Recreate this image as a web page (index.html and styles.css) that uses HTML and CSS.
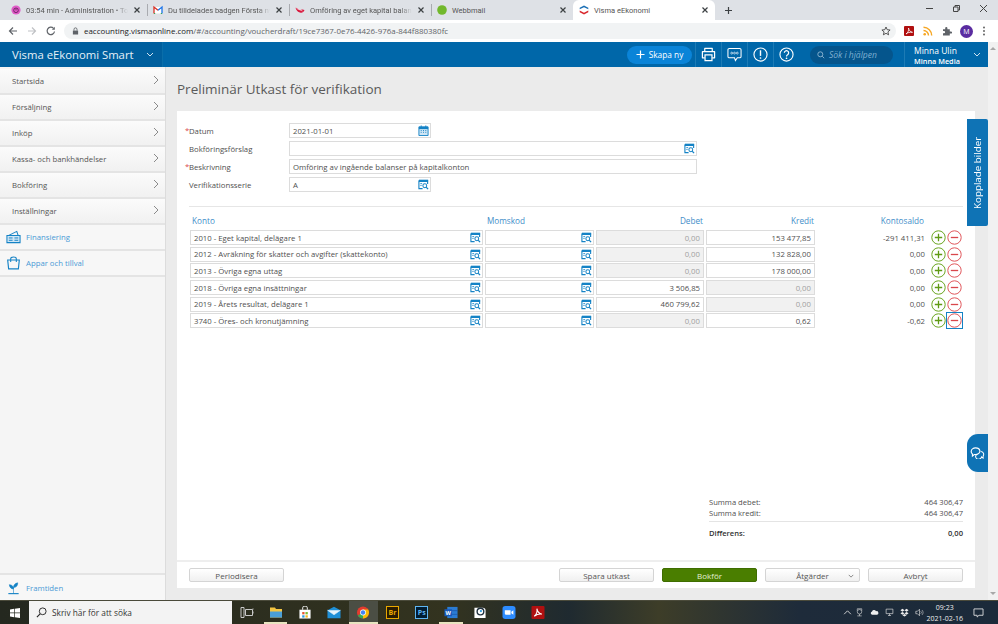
FILE: index.html
```html
<!DOCTYPE html>
<html lang="sv">
<head>
<meta charset="utf-8">
<title>Visma eEkonomi</title>
<link rel="stylesheet" href="styles.css">
</head>
<body>
<svg class="defs" width="0" height="0" aria-hidden="true">
  <symbol id="lookup" viewBox="0 0 12 12">
    <path d="M1 1.500h9.500v4M1 1.500v9h4" fill="none" stroke="#1482c5" stroke-width="1.200"/>
    <path d="M1 1h10v2.300H1z" fill="#1482c5"/>
    <path d="M2.500 5h2M2.500 7h1.500" stroke="#1482c5" stroke-width=".9"/>
    <circle cx="7.400" cy="7.400" r="2.100" fill="#fff" stroke="#1482c5" stroke-width="1.100"/>
    <path d="M9 9l2 2" stroke="#1482c5" stroke-width="1.300"/>
  </symbol>
  <symbol id="plus" viewBox="0 0 15 15">
    <circle cx="7.500" cy="7.500" r="6.700" fill="#fff" stroke="#6aa51f" stroke-width="1"/>
    <path d="M7.500 3.800v7.400M3.800 7.500h7.400" stroke="#5f9a14" stroke-width="1.300"/>
  </symbol>
  <symbol id="minus" viewBox="0 0 15 15">
    <circle cx="7.500" cy="7.500" r="6.700" fill="#fff" stroke="#e0565b" stroke-width="1"/>
    <path d="M3.800 7.500h7.400" stroke="#d9474c" stroke-width="1.300"/>
  </symbol>
  <symbol id="chev" viewBox="0 0 6 10">
    <path d="M1 1l4 4-4 4" fill="none" stroke="#8a8a8a" stroke-width="1"/>
  </symbol>
  <symbol id="down" viewBox="0 0 8 5">
    <path d="M1 1l3 3 3-3" fill="none" stroke="currentColor" stroke-width="1"/>
  </symbol>
  <symbol id="close" viewBox="0 0 8 8">
    <path d="M1.500 1.500l5 5M6.500 1.500l-5 5" stroke="#3c4043" stroke-width="1.200"/>
  </symbol>
</svg>

<div class="tabstrip">
  <div class="tab">
    <svg class="fav" viewBox="0 0 10 10"><circle cx="5" cy="5" r="4.600" fill="#e05bc8"/><circle cx="5" cy="5.300" r="2.300" fill="none" stroke="#5b1a52" stroke-width=".8"/><path d="M5 3.800v1.600" stroke="#5b1a52" stroke-width=".7"/></svg>
    <span class="tab-title fade">03:54 min - Administration • Togg</span>
    <svg class="tab-x"><use href="#close"/></svg>
  </div>
  <div class="tab tab-sep">
    <svg class="fav" viewBox="0 0 10 10"><path d="M1 2h8v6.500H1z" fill="#fff"/><path d="M1 8.500V2l4 3.200" fill="none" stroke="#d93025" stroke-width="1.300"/><path d="M9 8.500V2L5 5.200" fill="none" stroke="#1a73e8" stroke-width="1.300"/><path d="M1 8.500h1.200M7.800 8.500H9" stroke="#34a853" stroke-width="1"/></svg>
    <span class="tab-title fade">Du tilldelades badgen Första nya</span>
    <svg class="tab-x"><use href="#close"/></svg>
  </div>
  <div class="tab tab-sep">
    <svg class="fav" viewBox="0 0 10 10"><path d="M.5 2.800c2 0 3 1.700 4.500 2.200 1.500-.5 2.500-1 4.500 0C8.500 7.500 7 8 5 7.500 3 7 1.200 5.500.5 2.800z" fill="#d8163c"/><path d="M1.500 3.500l6 2.500" stroke="#fff" stroke-width=".6"/></svg>
    <span class="tab-title fade">Omföring av eget kapital balans</span>
    <svg class="tab-x"><use href="#close"/></svg>
  </div>
  <div class="tab tab-sep">
    <svg class="fav" viewBox="0 0 10 10"><circle cx="5" cy="5" r="4.800" fill="#72b82c"/></svg>
    <span class="tab-title">Webbmail</span>
    <svg class="tab-x"><use href="#close"/></svg>
  </div>
  <div class="tab tab-active">
    <svg class="fav" viewBox="0 0 10 10"><path d="M5 .5l4.300 2.300v1.500L5 2.200.7 4.300V2.800z" fill="#1a6fb5"/><path d="M.7 5.500L5 7.700l4.300-2.200v1.700L5 9.500.7 7.200z" fill="#d9292e"/></svg>
    <span class="tab-title">Visma eEkonomi</span>
    <svg class="tab-x"><use href="#close"/></svg>
  </div>
  <svg class="newtab" viewBox="0 0 9 9"><path d="M4.500 1v7M1 4.500h7" stroke="#3c4043" stroke-width="1.200"/></svg>
  <div class="winctl">
    <svg viewBox="0 0 9 9"><path d="M1 4.500h7" stroke="#444" stroke-width="1"/></svg>
    <svg viewBox="0 0 9 9"><path d="M1.500 3h4.500v4.500H1.500zM3 3V1.500h4.500V6H6" fill="none" stroke="#444" stroke-width="1"/></svg>
    <svg viewBox="0 0 9 9"><path d="M1 1l7 7M8 1L1 8" stroke="#444" stroke-width="1"/></svg>
  </div>
</div>

<div class="toolbar">
  <svg class="nav" viewBox="0 0 10 10"><path d="M9 5H1.500M5 1.500L1.500 5 5 8.500" fill="none" stroke="#5f6368" stroke-width="1.200"/></svg>
  <svg class="nav" viewBox="0 0 10 10"><path d="M1 5h7.500M5 1.500L8.500 5 5 8.500" fill="none" stroke="#c0c2c5" stroke-width="1.200"/></svg>
  <svg class="nav" viewBox="0 0 10 10"><path d="M8.500 5.500A3.700 3.700 0 1 1 7.500 2.300" fill="none" stroke="#5f6368" stroke-width="1.200"/><path d="M8.800 .8v3h-3z" fill="#5f6368"/></svg>
  <div class="urlbar">
    <svg class="lock" viewBox="0 0 8 9"><path d="M1 4h6v4.500H1z" fill="#5f6368"/><path d="M2.300 4V2.600a1.700 1.700 0 0 1 3.400 0V4" fill="none" stroke="#5f6368"/></svg>
    <span class="url"><b>eaccounting.vismaonline.com</b>/#/accounting/voucherdraft/19ce7367-0e76-4426-976a-844f880380fc</span>
    <svg class="star" viewBox="0 0 10 10"><path d="M5 1l1.200 2.700 2.900.3-2.200 1.900.7 2.900L5 7.300 2.400 8.800l.7-2.900L.9 4l2.900-.3z" fill="none" stroke="#444" stroke-width=".9"/></svg>
  </div>
  <div class="exts">
    <svg viewBox="0 0 10 10"><rect width="10" height="10" rx="1" fill="#b01010"/><path d="M2 8c2-1 3-4 2.500-6C5 4 6 6 8.500 6.300 6 6 3.500 6.500 2 8z" fill="none" stroke="#fff" stroke-width=".8"/></svg>
    <svg viewBox="0 0 10 10"><circle cx="1.700" cy="8.300" r="1.300" fill="#f6a623"/><path d="M.5 4.500A5 5 0 0 1 5.500 9.500M.5 1.300A8.200 8.200 0 0 1 8.700 9.500" fill="none" stroke="#f6a623" stroke-width="1.400"/></svg>
    <svg viewBox="0 0 10 10"><path d="M1 3.200h2.200V2a1.100 1.100 0 0 1 2.200 0v1.200h2.400v2.200H9a1.100 1.100 0 0 1 0 2.200H7.800V9.500H1V7.300h1a1.100 1.100 0 0 0 0-2.200H1z" fill="#5f6368"/></svg>
    <span class="avatar">M</span>
    <svg viewBox="0 0 4 10"><circle cx="2" cy="1.500" r=".9" fill="#555"/><circle cx="2" cy="5" r=".9" fill="#555"/><circle cx="2" cy="8.500" r=".9" fill="#555"/></svg>
  </div>
</div>

<header class="apphead">
  <div class="brand"><span>Visma eEkonomi Smart</span><svg class="down"><use href="#down"/></svg></div>
  <div class="head-spacer"></div>
  <button class="create"><svg viewBox="0 0 9 9"><path d="M4.500 .5v8M.5 4.500h8" stroke="#fff" stroke-width="1.200"/></svg>Skapa ny</button>
  <div class="head-icon divider-l"><svg viewBox="0 0 16 16"><path d="M4 5V1.500h8V5M4 11.500H1.500V5h13v6.500H12" fill="none" stroke="#fff" stroke-width="1.300" stroke-linejoin="round"/><path d="M4.300 8.500h7.400v6H4.300z" fill="none" stroke="#fff" stroke-width="1.300"/></svg></div>
  <div class="head-icon divider-l"><svg viewBox="0 0 16 16"><path d="M2.500 1.500h11a1.500 1.500 0 0 1 1.500 1.500v7a1.500 1.500 0 0 1-1.500 1.500H11l-2 3-1-3H2.500A1.500 1.500 0 0 1 1 10V3a1.500 1.500 0 0 1 1.500-1.500z" fill="none" stroke="#fff" stroke-width="1.100"/><circle cx="5" cy="6.500" r="1" fill="none" stroke="#fff" stroke-width=".7"/><circle cx="8" cy="6.500" r="1" fill="none" stroke="#fff" stroke-width=".7"/><circle cx="11" cy="6.500" r="1" fill="none" stroke="#fff" stroke-width=".7"/></svg></div>
  <div class="head-icon divider-l"><svg viewBox="0 0 16 16"><circle cx="8" cy="8" r="7" fill="none" stroke="#fff" stroke-width="1.200"/><path d="M8 3.500v6" stroke="#fff" stroke-width="1.500"/><circle cx="8" cy="11.700" r=".9" fill="#fff"/></svg></div>
  <div class="head-icon divider-l"><svg viewBox="0 0 16 16"><circle cx="8" cy="8" r="7" fill="none" stroke="#fff" stroke-width="1.200"/><path d="M5.700 6.200a2.300 2.300 0 1 1 3.500 2c-.8.500-1.200.9-1.200 1.800" fill="none" stroke="#fff" stroke-width="1.300"/><circle cx="8" cy="12" r=".9" fill="#fff"/></svg></div>
  <div class="search"><svg viewBox="0 0 8 8"><circle cx="3.300" cy="3.300" r="2.500" fill="none" stroke="#8fb7d3" stroke-width=".9"/><path d="M5.200 5.200l2 2" stroke="#8fb7d3" stroke-width=".9"/></svg><em>Sök i hjälpen</em></div>
  <div class="user divider-l"><div class="user-text"><span class="user-name">Minna Ulin</span><span class="user-org">Minna Media</span></div><svg class="down"><use href="#down"/></svg></div>
</header>

<div class="body-row">
  <nav class="sidebar">
    <a class="side-item"><span>Startsida</span><svg class="chev"><use href="#chev"/></svg></a>
    <a class="side-item"><span>Försäljning</span><svg class="chev"><use href="#chev"/></svg></a>
    <a class="side-item"><span>Inköp</span><svg class="chev"><use href="#chev"/></svg></a>
    <a class="side-item"><span>Kassa- och bankhändelser</span><svg class="chev"><use href="#chev"/></svg></a>
    <a class="side-item"><span>Bokföring</span><svg class="chev"><use href="#chev"/></svg></a>
    <a class="side-item"><span>Inställningar</span><svg class="chev"><use href="#chev"/></svg></a>
    <a class="side-item side-link"><svg class="side-ico" viewBox="0 0 16 14"><path d="M1 5.500h14v7.500H1z" fill="#cfe6f5" stroke="#1482c5" stroke-width="1.100"/><path d="M2.500 5.500L11.500 1l1.500 4.500" fill="none" stroke="#1482c5" stroke-width="1.100"/><path d="M3 8h4M9 8h4M3 10.500h4M9 10.500h4" stroke="#1482c5"/></svg><span>Finansiering</span></a>
    <a class="side-item side-link"><svg class="side-ico" viewBox="0 0 16 14"><path d="M1.800 3.800h12.400l-1 9.500H2.800z" fill="none" stroke="#1482c5" stroke-width="1.200"/><path d="M5 6V2.500a3 2 0 0 1 6 0V6" fill="none" stroke="#1482c5" stroke-width="1.100"/></svg><span>Appar och tillval</span></a>
    <div class="side-fill"></div>
    <a class="side-item side-link side-bottom"><svg class="side-ico" viewBox="0 0 16 14"><path d="M8 13V6M8 8C6 8 4 7 3.500 3.500 6 3.500 8 5 8 8zM8 6.500c0-2.500 1.500-4.500 4.500-5 0 3-1.500 5-4.500 5z" fill="#1482c5" stroke="#1482c5" stroke-width=".6"/><path d="M2.500 13h11" stroke="#1482c5" stroke-width="1.200"/></svg><span>Framtiden</span></a>
  </nav>

  <main class="content">
    <h1 class="page-title">Preliminär Utkast för verifikation</h1>
    <section class="card">
      <div class="card-body">
        <div class="form">
          <label class="lbl req">Datum</label>
          <div class="field f-short"><span>2021-01-01</span><svg class="ico" viewBox="0 0 12 12"><path d="M1 2h10v9.500H1z" fill="#cfe6f5" stroke="#1482c5"/><path d="M1 2h10v2.500H1z" fill="#1482c5"/><path d="M3.500 .5v2.500M8.500 .5v2.500" stroke="#1482c5"/><path d="M3 6h1M5.500 6h1M8 6h1M3 8h1M5.500 8h1M8 8h1" stroke="#1482c5"/></svg></div>
          <label class="lbl">Bokföringsförslag</label>
          <div class="field f-long"><span></span><svg class="ico"><use href="#lookup"/></svg></div>
          <label class="lbl req">Beskrivning</label>
          <div class="field f-long"><span>Omföring av ingående balanser på kapitalkonton</span></div>
          <label class="lbl">Verifikationsserie</label>
          <div class="field f-short"><span>A</span><svg class="ico"><use href="#lookup"/></svg></div>
        </div>
        <div class="rule"></div>

        <div class="grid grid-head">
          <span>Konto</span><span>Momskod</span><span class="r">Debet</span><span class="r">Kredit</span><span class="r">Kontosaldo</span><span></span>
        </div>
        <div class="grid">
          <div class="field"><span>2010 - Eget kapital, delägare 1</span><svg class="ico"><use href="#lookup"/></svg></div>
          <div class="field"><span></span><svg class="ico"><use href="#lookup"/></svg></div>
          <div class="field off r"><span>0,00</span></div>
          <div class="field r"><span>153 477,85</span></div>
          <span class="saldo">-291 411,31</span>
          <div class="acts"><svg><use href="#plus"/></svg><svg><use href="#minus"/></svg></div>
        </div>
        <div class="grid">
          <div class="field"><span>2012 - Avräkning för skatter och avgifter (skattekonto)</span><svg class="ico"><use href="#lookup"/></svg></div>
          <div class="field"><span></span><svg class="ico"><use href="#lookup"/></svg></div>
          <div class="field off r"><span>0,00</span></div>
          <div class="field r"><span>132 828,00</span></div>
          <span class="saldo">0,00</span>
          <div class="acts"><svg><use href="#plus"/></svg><svg><use href="#minus"/></svg></div>
        </div>
        <div class="grid">
          <div class="field"><span>2013 - Övriga egna uttag</span><svg class="ico"><use href="#lookup"/></svg></div>
          <div class="field"><span></span><svg class="ico"><use href="#lookup"/></svg></div>
          <div class="field off r"><span>0,00</span></div>
          <div class="field r"><span>178 000,00</span></div>
          <span class="saldo">0,00</span>
          <div class="acts"><svg><use href="#plus"/></svg><svg><use href="#minus"/></svg></div>
        </div>
        <div class="grid">
          <div class="field"><span>2018 - Övriga egna insättningar</span><svg class="ico"><use href="#lookup"/></svg></div>
          <div class="field"><span></span><svg class="ico"><use href="#lookup"/></svg></div>
          <div class="field r"><span>3 506,85</span></div>
          <div class="field off r"><span>0,00</span></div>
          <span class="saldo">0,00</span>
          <div class="acts"><svg><use href="#plus"/></svg><svg><use href="#minus"/></svg></div>
        </div>
        <div class="grid">
          <div class="field"><span>2019 - Årets resultat, delägare 1</span><svg class="ico"><use href="#lookup"/></svg></div>
          <div class="field"><span></span><svg class="ico"><use href="#lookup"/></svg></div>
          <div class="field r"><span>460 799,62</span></div>
          <div class="field off r"><span>0,00</span></div>
          <span class="saldo">0,00</span>
          <div class="acts"><svg><use href="#plus"/></svg><svg><use href="#minus"/></svg></div>
        </div>
        <div class="grid">
          <div class="field"><span>3740 - Öres- och kronutjämning</span><svg class="ico"><use href="#lookup"/></svg></div>
          <div class="field"><span></span><svg class="ico"><use href="#lookup"/></svg></div>
          <div class="field off r"><span>0,00</span></div>
          <div class="field r"><span>0,62</span></div>
          <span class="saldo">-0,62</span>
          <div class="acts"><svg><use href="#plus"/></svg><svg class="focus"><use href="#minus"/></svg></div>
        </div>

        <div class="totals">
          <div class="t-row"><span>Summa debet:</span><span>464 306,47</span></div>
          <div class="t-row"><span>Summa kredit:</span><span>464 306,47</span></div>
          <div class="t-row t-diff"><span>Differens:</span><span>0,00</span></div>
        </div>
      </div>
      <footer class="card-foot">
        <button class="btn">Periodisera</button>
        <div class="foot-gap"></div>
        <button class="btn">Spara utkast</button>
        <button class="btn btn-primary">Bokför</button>
        <button class="btn btn-menu"><span>Åtgärder</span><svg class="down"><use href="#down"/></svg></button>
        <button class="btn">Avbryt</button>
      </footer>
    </section>
    <div class="side-tab">Kopplade bilder</div>
    <div class="chat-tab"><svg viewBox="0 0 16 13"><path d="M6 1a4.700 3.800 0 0 1 4.600 3A4.700 3.800 0 0 1 6 8.200H4.500L2.500 9.800V7.500A3.900 3.200 0 0 1 1.200 4.500 4.700 3.500 0 0 1 6 1z" fill="none" stroke="#fff" stroke-width="1.200"/><path d="M11.500 5a3.200 3 0 0 1 2.600 4.700v2.300l-1.800-1.200A3.200 3 0 1 1 8 7.500" fill="none" stroke="#fff" stroke-width="1.100"/></svg></div>
  </main>

  <div class="scrollbar">
    <svg viewBox="0 0 6 4"><path d="M0 4l3-3 3 3z" fill="#a8a8a8"/></svg>
    <svg viewBox="0 0 6 4"><path d="M0 0l3 3 3-3z" fill="#a8a8a8"/></svg>
  </div>
</div>

<div class="taskbar">
  <div class="tb-start"><svg viewBox="0 0 12 12"><path d="M0 1.700L5 1v4.500H0zM5.800.9L12 0v5.500H5.800zM0 6.300h5v4.700l-5-.7zM5.800 6.300H12V12l-6.200-.9z" fill="#fff"/></svg></div>
  <div class="tb-search"><svg viewBox="0 0 12 12"><circle cx="7.300" cy="4.700" r="3.700" fill="none" stroke="#222" stroke-width="1"/><path d="M4.500 7.500L1 11" stroke="#222" stroke-width="1.200"/></svg><span>Skriv här för att söka</span></div>
  <div class="tb-apps">
    <div class="tb-app"><svg viewBox="0 0 14 12"><path d="M1 1h3v10H1zM5.500 3h7v6h-7zM13 2v1M13 5v2" fill="none" stroke="#c8c8c8"/></svg></div>
    <div class="tb-app on"><svg viewBox="0 0 14 12"><path d="M1 1h5l1 1.500h6V11H1z" fill="#f4c542"/><path d="M1 5h12v6H1z" fill="#4a9fd8"/></svg></div>
    <div class="tb-app"><svg viewBox="0 0 14 14"><path d="M1 4h12v9.500H1z" fill="#fff"/><path d="M4.500 4V2a2.500 2 0 0 1 5 0v2" fill="none" stroke="#fff"/><path d="M4 6.500h2.500V9H4z" fill="#e8542e"/><path d="M7.500 6.500H10V9H7.500z" fill="#7db92e"/><path d="M4 10h2.500v2.500H4z" fill="#2a9be0"/><path d="M7.500 10H10v2.500H7.500z" fill="#f7b61c"/></svg></div>
    <div class="tb-app"><svg viewBox="0 0 15 13"><path d="M.5 4L7.500.3 14.500 4v8.700H.5z" fill="#1f8fd6"/><path d="M.5 4l7 5 7-5" fill="#e9f5fc" stroke="#e9f5fc" stroke-width=".6"/></svg></div>
    <div class="tb-app chrome"><svg viewBox="0 0 14 14"><circle cx="7" cy="7" r="6.500" fill="#e33b2e"/><path d="M7 7L1.400 10.300A6.500 6.500 0 0 0 7 13.500z" fill="#34a853"/><path d="M7 7v6.500a6.500 6.500 0 0 0 5.600-9.700L7 3.800z" fill="#fbbc05"/><circle cx="7" cy="7" r="3.100" fill="#fff"/><circle cx="7" cy="7" r="2.400" fill="#4285f4"/></svg></div>
    <div class="tb-app"><span class="bx br">Br</span></div>
    <div class="tb-app"><span class="bx ps">Ps</span></div>
    <div class="tb-app on"><svg viewBox="0 0 15 13"><path d="M3.500 .5h11v12h-11z" fill="#2b7cd3"/><path d="M3.500 4.500h11M3.500 8.500h11" stroke="#103f91" stroke-width=".5"/><path d="M.5 3h8v7.500h-8z" fill="#185abd"/><text x="1.700" y="9" class="w-text">W</text></svg></div>
    <div class="tb-app"><svg viewBox="0 0 14 14"><path d="M1 2h9a3 3 0 0 1 3 3v8H1z" fill="#fff"/><circle cx="7.500" cy="6" r="3.600" fill="none" stroke="#22323f" stroke-width="1.500"/><circle cx="8" cy="5.500" r="1.200" fill="#2a9be0"/></svg></div>
    <div class="tb-app"><svg viewBox="0 0 14 14"><rect width="14" height="14" rx="3" fill="#2d8cff"/><path d="M2.500 4.500h6.200v5H4a1.500 1.500 0 0 1-1.500-1.500zM9.500 6.300l2.200-1.600v4.600L9.500 7.700z" fill="#fff"/></svg></div>
    <div class="tb-app"><svg viewBox="0 0 12 12"><rect width="12" height="12" rx="1" fill="#b01010"/><path d="M2.500 9.500c2-1.500 3-4 2.500-7 .5 3 2 4.500 4.500 5-2.500-.3-5 .5-7 2z" fill="none" stroke="#fff"/></svg></div>
  </div>
  <div class="tb-tray">
    <svg class="tray-up" viewBox="0 0 8 5"><path d="M1 4l3-3 3 3" fill="none" stroke="#ddd" stroke-width=".8"/></svg>
    <svg viewBox="0 0 10 12"><circle cx="5" cy="5" r="3" fill="none" stroke="#ddd" stroke-width=".8"/><path d="M2 10.500h6M5 8v2.500M2 3.500V1h6v2.500" fill="none" stroke="#ddd" stroke-width=".8"/></svg>
    <svg viewBox="0 0 12 7"><path d="M3 6.500a2.300 2.300 0 0 1-.3-4.500A3 3 0 0 1 8 1.800 2.400 2.400 0 0 1 9.500 6.500z" fill="#eee"/></svg>
    <svg viewBox="0 0 12 11"><path d="M1.500 1h9v6h-9zM4 9.500h4M6 7v2.500" fill="none" stroke="#ddd" stroke-width=".9"/></svg>
    <svg viewBox="0 0 11 10"><path d="M3 .5l2.500 1.700L3 4 .5 2.200zM8 .5l2.500 1.700L8 4 5.500 2.200zM3 4.300l2.500 1.700L8 4.300 10.500 6 8 7.700 5.500 6 3 7.700.5 6zM3 8.300l2.500-1.500L8 8.300 5.500 9.800z" fill="#eee"/></svg>
    <svg viewBox="0 0 11 10"><path d="M1 3.500h2L5.500 1v8L3 6.500H1z" fill="none" stroke="#ddd" stroke-width=".8"/><path d="M7 3.500a2 2 0 0 1 0 3M8.500 2a4 4 0 0 1 0 6" fill="none" stroke="#ddd" stroke-width=".7"/></svg>
    <div class="clock"><span>09:23</span><span>2021-02-16</span></div>
    <svg class="notif" viewBox="0 0 12 11"><path d="M1 1h10v7H6.500L4.500 10V8H1z" fill="none" stroke="#eee" stroke-width=".9"/></svg>
  </div>
</div>
</body>
</html>
```

FILE: styles.css
```css
* { box-sizing: border-box; }
html, body { margin: 0; padding: 0; }
body {
  width: 998px;
  height: 624px;
  overflow: hidden;
  display: flex;
  flex-direction: column;
  font-family: "Open Sans", "Noto Sans", sans-serif;
  font-size: 7.75px;
  color: #4f4f4f;
  background: #ebebeb;
}
.defs { position: absolute; }
button { font-family: inherit; }

/* Browser chrome */
.tabstrip {
  height: 20px;
  flex: none;
  display: flex;
  align-items: stretch;
  background: #dee1e6;
  padding-left: 5px;
}
.tab {
  width: 142px;
  display: flex;
  align-items: center;
  padding: 0 6px;
  gap: 5px;
  font-family: Roboto, "Open Sans", sans-serif;
  font-size: 7.5px;
  color: #555;
  position: relative;
}
.tab-sep::before {
  content: "";
  position: absolute;
  left: 0;
  top: 4px;
  bottom: 4px;
  width: 1px;
  background: #a9abb0;
}
.tab-active {
  background: #fff;
  border-radius: 6px 6px 0 0;
}
.fav { width: 10px; height: 10px; flex: none; }
.tab-title { flex: 1; min-width: 0; white-space: nowrap; }
.fade {
  -webkit-mask-image: linear-gradient(90deg, #000 88%, transparent 100%);
  mask-image: linear-gradient(90deg, #000 88%, transparent 100%);
}
.tab-x { width: 8px; height: 8px; flex: none; }
.newtab { width: 9px; height: 9px; margin: 6px 0 0 9px; }
.winctl {
  margin-left: auto;
  display: flex;
  gap: 18px;
  padding: 4px 10px 0 0;
}
.winctl svg { width: 9px; height: 9px; }

.toolbar {
  height: 22px;
  flex: none;
  display: flex;
  align-items: center;
  background: #fff;
  padding-left: 8px;
  gap: 9px;
}
.nav { width: 10px; height: 10px; flex: none; }
.urlbar {
  width: 832px;
  height: 16px;
  margin-left: -1px;
  background: #f1f3f4;
  border-radius: 8px;
  display: flex;
  align-items: center;
  padding: 0 5px 0 8px;
  gap: 5px;
  font-size: 7.93px;
  color: #5f6368;
}
.url b { font-weight: 400; color: #202124; }
.url { flex: 1; white-space: nowrap; }
.lock { width: 7px; height: 8px; flex: none; }
.star { width: 10px; height: 10px; flex: none; }
.exts { display: flex; align-items: center; gap: 9px; margin-left: -1px; }
.exts svg { width: 10px; height: 10px; flex: none; }
.exts svg:last-child { width: 4px; }
.avatar {
  width: 13px;
  height: 13px;
  margin-left: -1px;
  border-radius: 50%;
  background: #5a2ca0;
  color: #fff;
  font-size: 7px;
  display: flex;
  align-items: center;
  justify-content: center;
}

/* App header */
.apphead {
  height: 25px;
  flex: none;
  display: flex;
  align-items: stretch;
  background: #0067a9;
  margin-right: 10px;
  position: relative;
  color: #fff;
}
.down { width: 8px; height: 5px; color: #cfe2ef; flex: none; }
.brand {
  width: 163px;
  display: flex;
  align-items: center;
  padding-left: 12px;
  gap: 12px;
  font-size: 11.3px;
  color: #e6f1f8;
  background: #005f9e;
  border-right: 1px solid #0b6ea9;
}
.head-spacer { flex: 1; }
.create {
  align-self: center;
  width: 65px;
  height: 18px;
  border: 0;
  border-radius: 9px;
  background: #0a84d8;
  color: #fff;
  font-size: 8.3px;
  display: flex;
  align-items: center;
  justify-content: center;
  gap: 4px;
  padding: 0;
  margin-right: 3px;
}
.create svg { width: 9px; height: 9px; }
.head-icon {
  width: 26px;
  display: flex;
  align-items: center;
  justify-content: center;
}
.head-icon svg { width: 15px; height: 15px; }
.divider-l { border-left: 1px solid #1d7bb5; }
.search {
  align-self: center;
  width: 83px;
  height: 18px;
  margin-left: 11px;
  border-radius: 9px;
  background: #05558c;
  color: #7fb0d2;
  font-size: 8.5px;
  display: flex;
  align-items: center;
  gap: 4px;
  padding-left: 7px;
}
.search svg { width: 8px; height: 8px; }
.user {
  width: 84px;
  margin-left: 11px;
  padding: 0 7px 0 9px;
  display: flex;
  align-items: center;
  justify-content: space-between;
}
.user-text { display: flex; flex-direction: column; padding-top: 2px; }
.user-name { font-size: 8.5px; line-height: 11px; }
.user-org { font-size: 7.3px; line-height: 11px; font-weight: 600; }

/* Body */
.body-row { flex: 1; min-height: 0; display: flex; }
.sidebar {
  width: 166px;
  flex: none;
  display: flex;
  flex-direction: column;
  background: #f5f5f5;
  border-right: 1px solid #dcdcdc;
  padding-top: 2px;
}
.side-item {
  height: 26px;
  flex: none;
  display: flex;
  align-items: center;
  padding: 0 6px 0 12px;
  justify-content: space-between;
  background: linear-gradient(#fbfbfb, #f1f1f1);
  border-bottom: 2px solid #e4e4e4;
  color: #555;
}
.chev { width: 6px; height: 10px; margin-top: -3px; }
.side-link {
  justify-content: flex-start;
  padding-left: 6px;
  gap: 5px;
  background: #f7f7f7;
  color: #4a9ad6;
}
.side-ico { width: 15px; height: 14px; flex: none; }
.side-fill { flex: 1; }
.side-bottom { height: 27px; border-bottom: 0; border-top: 2px solid #e4e4e4; }

.content {
  flex: 1;
  min-width: 0;
  display: flex;
  flex-direction: column;
  padding: 0 13px 12px 11px;
  position: relative;
}
.page-title {
  margin: 0;
  height: 44px;
  display: flex;
  align-items: center;
  font-size: 13.5px;
  font-weight: 400;
  color: #5a5a5a;
  flex: none;
}
.card {
  flex: 1;
  min-height: 0;
  display: flex;
  flex-direction: column;
  background: #fff;
}
.card-body {
  flex: 1;
  display: flex;
  flex-direction: column;
  padding: 12px 12px 0 13px;
}
.form {
  display: grid;
  grid-template-columns: 100px 408px;
  grid-auto-rows: 15px;
  row-gap: 3px;
  align-items: center;
  margin-left: -1px;
}
.lbl { position: relative; }
.lbl.req::before {
  content: "*";
  position: absolute;
  left: -4px;
  top: 0;
  color: #d9474c;
}
.f-short { width: 142px; }
.f-long { width: 408px; }
.field {
  height: 15px;
  display: flex;
  align-items: center;
  justify-content: space-between;
  border: 1px solid #dcdcdc;
  background: #fff;
  padding: 0 1px 0 3px;
  color: #4f4f4f;
  white-space: nowrap;
  overflow: hidden;
}
.field.r { justify-content: flex-end; padding-right: 3px; }
.field.off { background: #f1f1f1; color: #a0a0a0; }
.ico { width: 11px; height: 11px; flex: none; }
.rule { height: 1px; background: #e6e6e6; margin: 14px 0 8px -1px; }
.grid {
  display: grid;
  grid-template-columns: 293px 109px 108px 109px 108px 36px;
  column-gap: 2px;
  align-items: center;
  margin-bottom: 1.7px;
}
.grid-head { color: #3f8ec9; font-size: 8.2px; height: 15px; align-items: start; margin-bottom: 0; }
.grid-head > :nth-child(1) { padding-left: 2px; }
.grid-head > :nth-child(2) { padding-left: 2px; }
.grid-head .r { text-align: right; padding-right: 1px; }
.saldo { text-align: right; }
.acts { display: flex; gap: 1px; align-items: center; margin-left: 4px; }
.acts svg { width: 15px; height: 15px; flex: none; }
.acts .focus { outline: 1px solid #1482c5; }

.totals {
  margin-top: auto;
  margin-left: 519px;
  padding-bottom: 20px;
  font-size: 7.6px;
}
.t-row {
  display: flex;
  justify-content: space-between;
  height: 10.500px;
  line-height: 10.500px;
}
.t-diff {
  margin-top: 3px;
  padding-top: 6px;
  height: 19px;
  border-top: 1px solid #e4e4e4;
  font-weight: 600;
  color: #333;
}
.card-foot {
  flex: none;
  height: 28px;
  display: flex;
  align-items: center;
  gap: 8px;
  padding: 0 12px;
  border-top: 2px solid #eeeeee;
}
.foot-gap { flex: 1; }
.btn {
  width: 95px;
  height: 14px;
  padding: 0;
  font-size: 8px;
  border: 1px solid #d4d4d4;
  border-radius: 2px;
  background: linear-gradient(#fff, #f0f0f0);
  color: #555;
  display: flex;
  align-items: center;
  justify-content: center;
}
.btn-primary {
  background: #4a7e00;
  border-color: #3f6d00;
  color: #e4efd4;
}
.btn-menu { position: relative; }
.btn-menu .down { position: absolute; right: 5px; top: 5px; color: #666; width: 6px; height: 4px; }

.side-tab {
  position: absolute;
  right: 0;
  top: 52px;
  width: 21px;
  height: 107px;
  background: #0f73b5;
  border-radius: 2px 0 0 2px;
  color: #fff;
  font-size: 9.8px;
  writing-mode: vertical-rl;
  transform: rotate(180deg);
  display: flex;
  align-items: center;
  justify-content: center;
}
.chat-tab {
  position: absolute;
  right: 0;
  top: 367px;
  width: 21px;
  height: 38px;
  background: #0f73b5;
  border-radius: 11px 0 0 11px;
  display: flex;
  align-items: center;
  justify-content: center;
}
.chat-tab svg { width: 15px; height: 12px; }

.scrollbar {
  width: 10px;
  flex: none;
  margin-top: -25px;
  background: #f1f1f1;
  display: flex;
  flex-direction: column;
  justify-content: space-between;
  align-items: center;
  padding: 4px 0;
  position: relative;
}
.scrollbar svg { width: 6px; height: 4px; }

/* Taskbar */
.taskbar {
  height: 24px;
  flex: none;
  display: flex;
  align-items: center;
  background: linear-gradient(90deg, #24281f 0%, #33331f 45%, #1f2a30 57%, #3d3d28 66%, #1e2b3a 80%, #1b2a3a 100%);
  border-top: 1px solid #4a4a3a;
  color: #eee;
}
.tb-start { width: 29px; display: flex; justify-content: center; }
.tb-start svg { width: 10px; height: 10px; }
.tb-search {
  width: 203px;
  height: 23px;
  background: #f3f3f3;
  color: #333;
  font-size: 8.300px;
  display: flex;
  align-items: center;
  gap: 5px;
  padding-left: 7px;
}
.tb-search svg { width: 11px; height: 11px; }
.tb-apps { display: flex; align-items: stretch; height: 23px; }
.tb-app {
  width: 29.200px;
  height: 23px;
  display: flex;
  align-items: center;
  justify-content: center;
  position: relative;
}
.tb-app svg { width: 14px; height: 13px; }
.tb-app.on::after {
  content: "";
  position: absolute;
  left: 3px;
  right: 3px;
  bottom: 0;
  height: 2px;
  background: #e8e4c0;
}
.chrome::after {
  content: "";
  position: absolute;
  left: 0;
  right: 0;
  bottom: 0;
  height: 2px;
  background: #e8e4c0;
}
.chrome { background: #4b4e44; }
.bx {
  width: 13px;
  height: 13px;
  font-size: 7px;
  font-weight: 700;
  display: flex;
  align-items: center;
  justify-content: center;
  line-height: 1;
}
.br { background: #2b1c00; color: #e8a800; border: 1px solid #e8a800; }
.ps { background: #001d33; color: #5fb6f2; border: 1px solid #5fb6f2; }
.w-text { font: 700 6px "Open Sans", sans-serif; fill: #fff; }
.tb-tray {
  margin-left: auto;
  display: flex;
  align-items: center;
  gap: 6px;
  padding-right: 14px;
}
.tb-tray svg { width: 9px; height: 9px; flex: none; }
.tb-tray .tray-up { margin-right: -3px; }
.clock {
  display: flex;
  flex-direction: column;
  align-items: center;
  font-size: 7px;
  line-height: 11px;
  margin: 0 4px 0 -4px;
}
.tb-tray .notif { width: 11px; height: 10px; }
```
